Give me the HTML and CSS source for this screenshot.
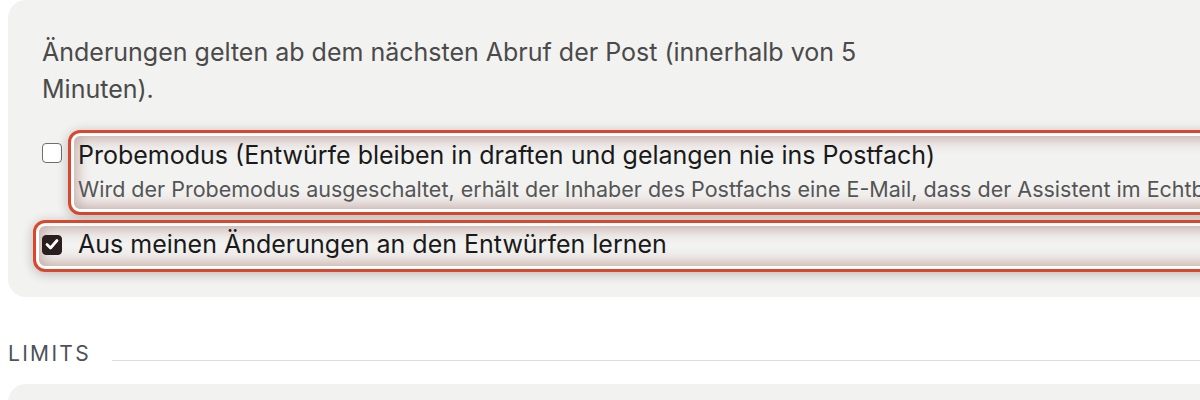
FILE: index.html
```html
<!DOCTYPE html>
<html lang="de">
<head>
<meta charset="utf-8">
<title>Einstellungen</title>
<link rel="stylesheet" href="styles.css">
</head>
<body>
<div class="page">
  <section class="card">
    <p class="intro">Änderungen gelten ab dem nächsten Abruf der Post (innerhalb von 5 Minuten).</p>

    <div class="row row-one">
      <span class="box"></span>
      <div class="textblock hl hl-one">
        <div class="label">Probemodus (Entwürfe bleiben in draften und gelangen nie ins Postfach)</div>
        <div class="hint">Wird der Probemodus ausgeschaltet, erhält der Inhaber des Postfachs eine E-Mail, dass der Assistent im Echtbetrieb arbeitet.</div>
      </div>
    </div>

    <div class="row row-two hl hl-two">
      <span class="box checked">
        <svg viewBox="0 0 20 20" width="20" height="20" aria-hidden="true"><path d="M5 10.5 L8.5 14 L15 6.5" fill="none" stroke="#ffffff" stroke-width="2.8" stroke-linecap="round" stroke-linejoin="round"/></svg>
      </span>
      <div class="label">Aus meinen Änderungen an den Entwürfen lernen</div>
    </div>
  </section>

  <div class="section-head">
    <span class="section-title">Limits</span>
    <span class="section-line"></span>
  </div>

  <section class="card card-next"></section>
</div>
</body>
</html>
```

FILE: styles.css
```css
html, body {
  margin: 0;
  padding: 0;
  overflow: hidden;
  background: #ffffff;
}

body {
  font-family: Inter, "Noto Sans", "Liberation Sans", sans-serif;
  color: #1c1c1c;
}

.page {
  width: 1700px;
  padding: 0 0 0 8px;
}

.card {
  background: #f2f2f0;
  border-radius: 18px;
  padding: 34px 34px 36px 34px;
}

.intro {
  margin: 0;
  max-width: 860px;
  font-size: 25px;
  line-height: 37px;
  color: #4a4a4a;
}

.row {
  display: flex;
  gap: 16px;
}

.row-one {
  margin-top: 32px;
  align-items: flex-start;
}

.row-one .box {
  margin-top: 3px;
}

.row-two {
  margin-top: 25px;
  align-items: center;
}

.box {
  flex: none;
  width: 20px;
  height: 20px;
  box-sizing: border-box;
  border: 1.5px solid #6f6f6f;
  border-radius: 4px;
  background: #ffffff;
  display: flex;
}

.box.checked {
  background: #2a1e1e;
  border-color: #2a1e1e;
}

.box svg {
  margin: -1.5px;
}

.textblock {
  flex: 1;
}

.label {
  font-size: 25px;
  line-height: 30px;
  color: #1a1a1a;
  white-space: nowrap;
}

.row-two .label {
  line-height: 33px;
}

.hint {
  margin-top: 5px;
  font-size: 21.5px;
  line-height: 28px;
  color: #555555;
  white-space: nowrap;
}

/* annotation highlight ring, drawn behind the content */
.hl {
  position: relative;
  z-index: 0;
}

.hl::before {
  content: "";
  position: absolute;
  z-index: -1;
  border: 3px solid #d9472c;
  border-radius: 12px;
  box-shadow:
    0 2px 12px rgba(0, 0, 0, 0.24),
    inset 0 0 0 3px #ffffff,
    inset 0 0 14px 6px rgba(140, 80, 70, 0.44);
}

.hl-one::before {
  top: -10px;
  left: -10px;
  bottom: -12px;
  right: -10px;
}

.hl-two::before {
  top: -8px;
  left: -9px;
  bottom: -11px;
  right: -9px;
}

.section-head {
  display: flex;
  align-items: flex-end;
  gap: 21px;
  margin-top: 45px;
}

.section-title {
  font-size: 21px;
  line-height: 24px;
  letter-spacing: 2.3px;
  text-transform: uppercase;
  color: #4d5259;
}

.section-line {
  flex: 1;
  height: 1.5px;
  background: #dcdcdc;
  margin-bottom: 5px;
}

.card-next {
  margin-top: 18px;
  height: 80px;
  padding: 0;
}
```
